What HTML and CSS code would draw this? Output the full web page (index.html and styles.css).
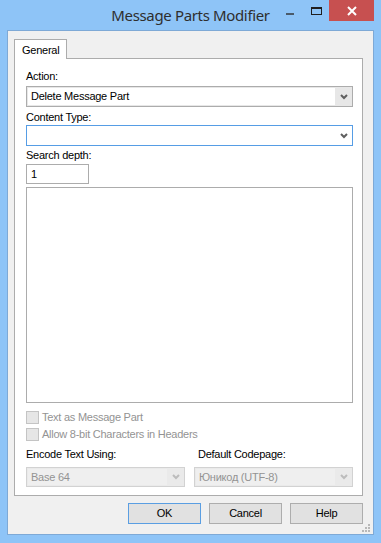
FILE: index.html
```html
<!DOCTYPE html>
<html>
<head>
<meta charset="utf-8">
<link rel="stylesheet" href="styles.css">
</head>
<body>
<div class="window">
  <div class="titlebar">
    <div class="tb-spacer"></div>
    <div class="title">Message Parts Modifier</div>
    <div class="controls">
      <div class="ctl ctl-min"><span class="min-dash"></span></div>
      <div class="ctl ctl-max"><span class="max-box"></span></div>
      <div class="ctl ctl-close">
        <svg width="10" height="10" viewBox="0 0 10 10"><path d="M1 1 L9 9 M9 1 L1 9" stroke="#fff" stroke-width="2" fill="none"/></svg>
      </div>
    </div>
  </div>
  <div class="client">
    <div class="tabs"><div class="tab">General</div></div>
    <div class="panel">
      <div class="label m11">Action:</div>
      <div class="combo m3">
        <div class="combo-field">Delete Message Part</div>
        <div class="combo-btn"><svg width="8" height="6" viewBox="0 0 8 6"><path d="M1 1 L4 4 L7 1" stroke="#5f5f5f" stroke-width="2" fill="none"/></svg></div>
      </div>
      <div class="label m4">Content Type:</div>
      <div class="combo combo-focus m1">
        <div class="combo-field"></div>
        <div class="combo-btn"><svg width="8" height="6" viewBox="0 0 8 6"><path d="M1 1 L4 4 L7 1" stroke="#5f5f5f" stroke-width="2" fill="none"/></svg></div>
      </div>
      <div class="label m3">Search depth:</div>
      <div class="textbox m2">1</div>
      <div class="bigbox m3"></div>
      <div class="check m8"><span class="box"></span><span>Text as Message Part</span></div>
      <div class="check m4"><span class="box"></span><span>Allow 8-bit Characters in Headers</span></div>
      <div class="pair m7">
        <div class="label">Encode Text Using:</div>
        <div class="label">Default Codepage:</div>
      </div>
      <div class="pair m6">
        <div class="combo combo-dis">
          <div class="combo-field">Base 64</div>
          <div class="combo-btn"><svg width="8" height="6" viewBox="0 0 8 6"><path d="M1 1 L4 4 L7 1" stroke="#bcbcbc" stroke-width="2" fill="none"/></svg></div>
        </div>
        <div class="combo combo-dis">
          <div class="combo-field">Юникод (UTF-8)</div>
          <div class="combo-btn"><svg width="8" height="6" viewBox="0 0 8 6"><path d="M1 1 L4 4 L7 1" stroke="#bcbcbc" stroke-width="2" fill="none"/></svg></div>
        </div>
      </div>
    </div>
    <div class="buttons">
      <div class="btn btn-default">OK</div>
      <div class="btn">Cancel</div>
      <div class="btn">Help</div>
    </div>
    <svg class="grip" width="9" height="9" viewBox="0 0 9 9">
      <rect x="6" y="0" width="2" height="2" fill="#b8b8b8"/>
      <rect x="3" y="3" width="2" height="2" fill="#b8b8b8"/>
      <rect x="6" y="3" width="2" height="2" fill="#b8b8b8"/>
      <rect x="0" y="6" width="2" height="2" fill="#b8b8b8"/>
      <rect x="3" y="6" width="2" height="2" fill="#b8b8b8"/>
      <rect x="6" y="6" width="2" height="2" fill="#b8b8b8"/>
    </svg>
  </div>
</div>
</body>
</html>
```
FILE: styles.css
```css
* { box-sizing: border-box; }
html, body { margin: 0; padding: 0; }
body { width: 381px; height: 543px; overflow: hidden; font-family: "Liberation Sans", Arial, sans-serif; font-size: 11px; color: #000; letter-spacing: -0.25px; }

.window {
  width: 381px; height: 543px;
  background: #8ec4f7;
  padding: 0 7px 8px 7px;
  display: flex; flex-direction: column;
}
.titlebar {
  height: 30px; margin: 0 -7px;
  display: grid; grid-template-columns: 1fr auto 1fr;
}
.title {
  font-family: "Noto Sans", "Open Sans", sans-serif;
  font-size: 15px; line-height: 30px; color: #2e2e2e;
  letter-spacing: -0.35px;
  white-space: nowrap;
}
.controls { display: flex; justify-content: flex-end; align-items: flex-start; padding-right: 7px; }
.ctl { height: 21px; display: flex; align-items: center; justify-content: center; }
.ctl-min { width: 26px; }
.ctl-max { width: 26px; }
.ctl-close { width: 45px; background: #c75050; }
.min-dash { display: block; width: 8px; height: 2px; background: #4a5a6a; margin-top: 6px; }
.max-box { display: block; width: 11px; height: 8px; border: 1px solid #1f1f1f; border-top-width: 2px; margin-top: 1px; }

.client {
  position: relative;
  flex: 1;
  background: #f0f0f0;
  border: 1px solid #7ea9d6;
  padding: 8px 10px 0 6px;
  display: flex; flex-direction: column;
}
.tabs { display: flex; }
.tab {
  position: relative; z-index: 1;
  width: 53px; height: 20px; margin-bottom: -1px;
  background: #fff;
  border: 1px solid #acacac; border-bottom: none;
  padding-left: 7px; line-height: 17px; padding-top: 2px;
}
.panel {
  height: 438px;
  background: #fff;
  border: 1px solid #acacac;
  padding: 0 9px 0 11px;
  display: flex; flex-direction: column;
}
.label { line-height: 13px; height: 13px; white-space: nowrap; }
.m1 { margin-top: 1px; } .m2 { margin-top: 2px; } .m3 { margin-top: 3px; } .m4 { margin-top: 4px; }
.m6 { margin-top: 6px; } .m7 { margin-top: 7px; } .m8 { margin-top: 8px; } .m11 { margin-top: 11px; }

.combo {
  height: 21px; border: 1px solid #acacac; background: #e7e7e7;
  padding: 1px 0 1px 1px;
  display: flex;
}
.combo-field { flex: 1; background: #fff; padding-left: 3px; line-height: 17px; white-space: nowrap; overflow: hidden; }
.combo-btn { width: 17px; display: flex; align-items: center; justify-content: center; }
.combo-focus { border-color: #569de5; background: #fff; }
.combo-dis { height: 20px; flex: 0 0 159px; border-color: #d2d2d2; background: #eaeaea; color: #939393; }
.combo-dis .combo-field { background: #efefef; line-height: 16px; }

.textbox { width: 63px; height: 20px; border: 1px solid #acacac; padding-left: 4px; line-height: 18px; }
.bigbox { height: 216px; border: 1px solid #acacac; }

.check { height: 13px; display: flex; align-items: flex-start; line-height: 13px; color: #939393; }
.check .box { width: 13px; height: 13px; border: 1px solid #c4c4c4; background: #e6e6e6; margin-right: 3px; }

.pair { display: flex; gap: 9px; }
.pair .label { flex: 0 0 159px; padding-left: 0; }
.pair .label + .label { padding-left: 4px; }

.buttons { display: flex; justify-content: flex-end; gap: 8px; margin-top: 7px; }
.btn {
  width: 73px; height: 21px; background: #e1e1e1; border: 1px solid #adadad;
  text-align: center; line-height: 19px;
}
.btn-default { border-color: #5a9ee2; }
.grip { position: absolute; right: 2px; bottom: 1px; }
```
